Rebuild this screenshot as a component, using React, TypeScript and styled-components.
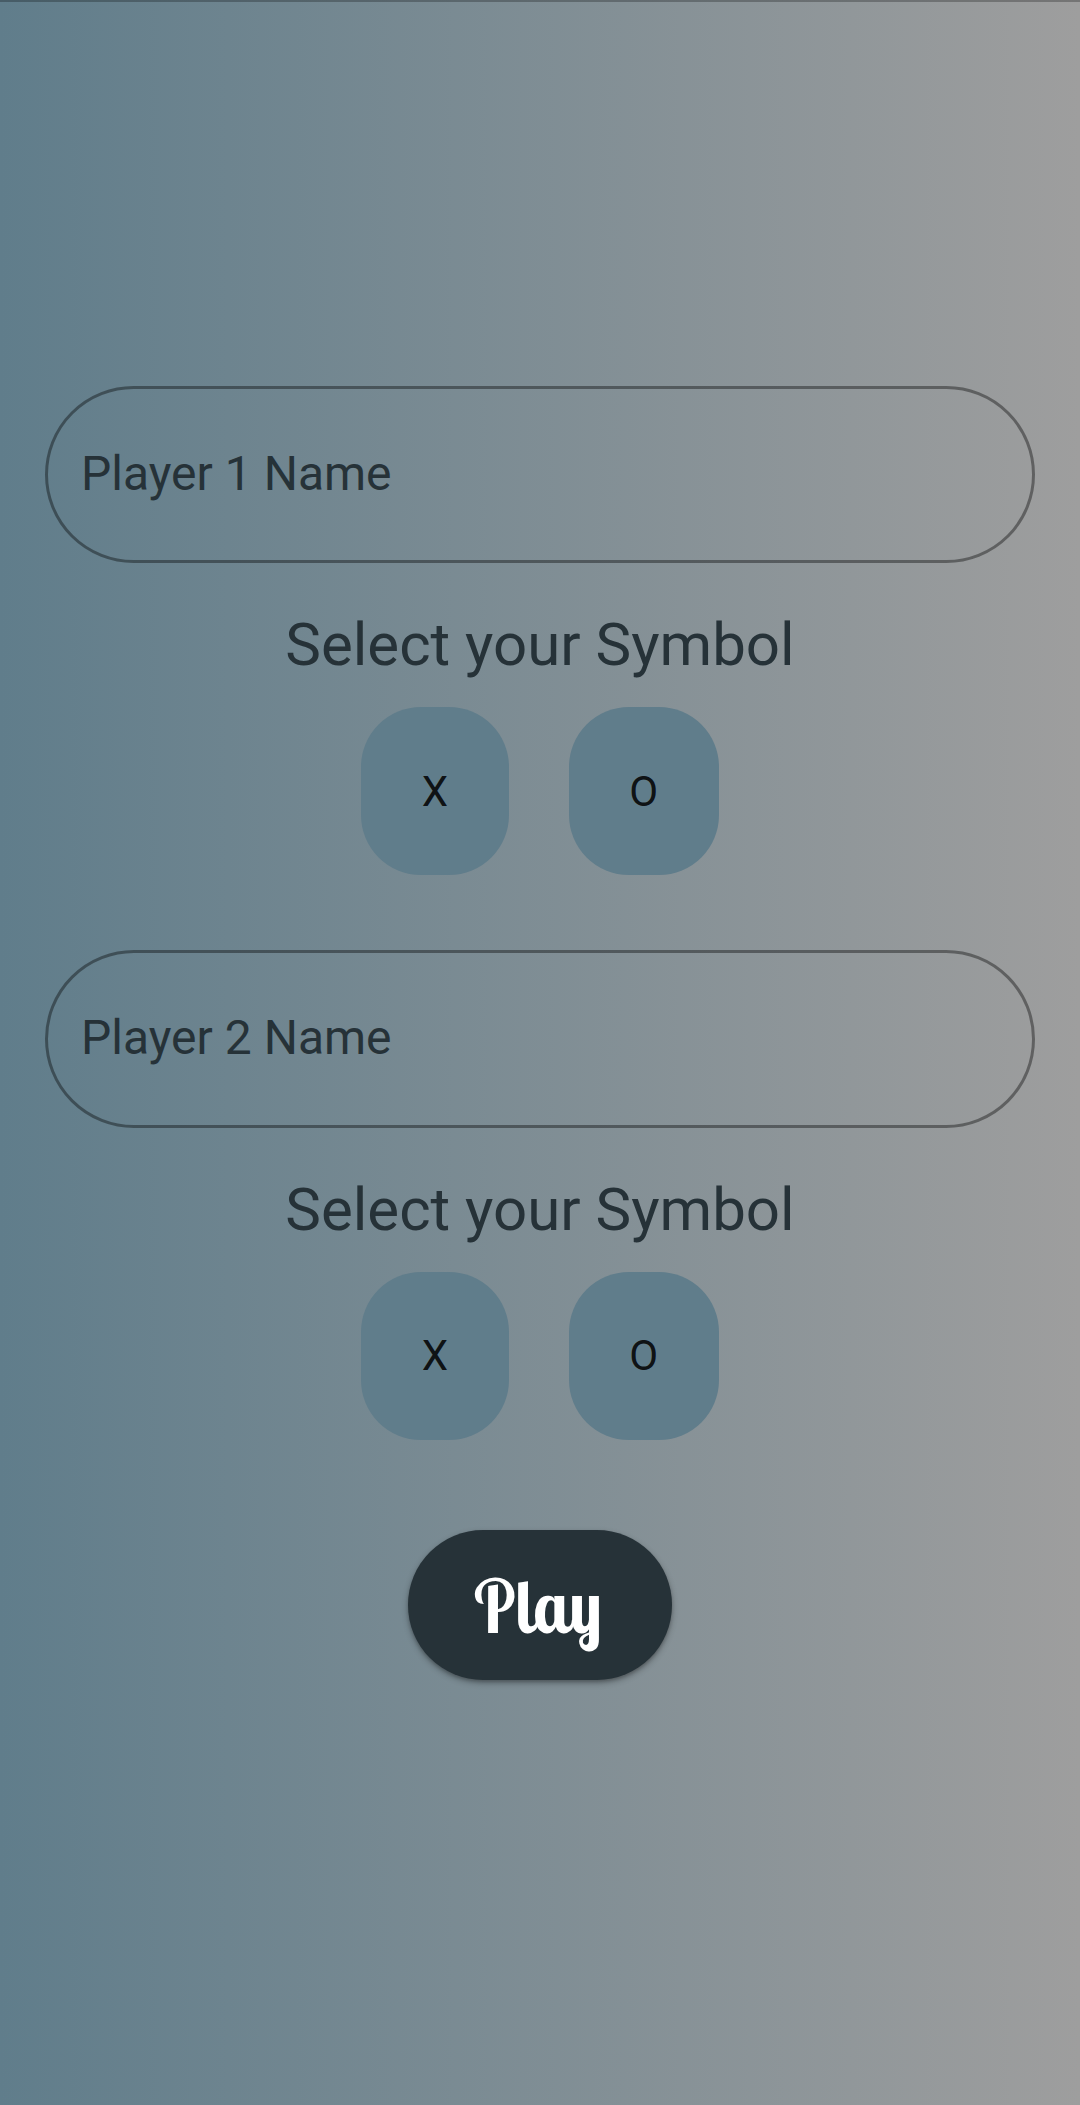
import React from "react";
import styled, { createGlobalStyle } from "styled-components";

const GlobalStyle = createGlobalStyle`
  *, *::before, *::after { box-sizing: border-box; }
  body { margin: 0; }
`;

const Screen = styled.main`
  display: flex;
  flex-direction: column;
  align-items: center;
  height: 2105px;
  width: 100%;
  background: linear-gradient(to right, #607d8b, #9e9e9e);
  font-family: Roboto, "Liberation Sans", sans-serif;
  color: #263238;
`;

const StatusEdge = styled.div`
  width: 100%;
  height: 2px;
  margin-bottom: 383.6px;
  background: rgba(0, 0, 0, 0.26);
`;

const PlayerSection = styled.section`
  display: flex;
  flex-direction: column;
  align-items: center;
  width: 100%;
  height: 564.6px;
  padding: 0 45px;
`;

const NameField = styled.div`
  display: flex;
  align-items: center;
  width: 100%;
  height: 177.6px;
  padding: 0 33px 1px;
  border: 3px solid rgba(0, 0, 0, 0.38);
  border-radius: 90px;
  font-size: 48px;
  line-height: 56px;
`;

const Prompt = styled.h2`
  margin: 46.8px 0 0;
  font-size: 60px;
  font-weight: 400;
  line-height: 70px;
  white-space: nowrap;
`;

const SymbolRow = styled.div`
  display: flex;
  gap: 60px;
  margin-top: 27px;
`;

const SymbolButton = styled.button<{ $width: number }>`
  width: ${(p) => p.$width}px;
  height: 168px;
  padding: 0.6px 0 0;
  border: 0;
  border-radius: 60px;
  background: #607d8b;
  color: rgba(0, 0, 0, 0.87);
  font: 400 42px/49px Roboto, "Liberation Sans", sans-serif;
`;

const PlayButton = styled.button`
  width: 264px;
  height: 150px;
  margin-top: 15.2px;
  padding: 3px 2px 0 0;
  border: 0;
  border-radius: 75px;
  background: #263238;
  box-shadow: 0 3px 6px rgba(0, 0, 0, 0.3), 0 2px 3px rgba(0, 0, 0, 0.15);
  color: #fff;
  font: 400 74px/90px Lobster, Lato, sans-serif;
`;

const UprightScript = styled.span`
  display: inline-block;
  transform: scaleX(0.92) skewX(12deg);
`;

const players = [1, 2];

export default function App() {
  return (
    <>
      <GlobalStyle />
      <Screen>
        <StatusEdge />
        {players.map((n) => (
          <PlayerSection key={n}>
            <NameField>Player {n} Name</NameField>
            <Prompt>Select your Symbol</Prompt>
            <SymbolRow>
              <SymbolButton $width={147.5}>X</SymbolButton>
              <SymbolButton $width={150}>O</SymbolButton>
            </SymbolRow>
          </PlayerSection>
        ))}
        <PlayButton>
          <UprightScript>Play</UprightScript>
        </PlayButton>
      </Screen>
    </>
  );
}
